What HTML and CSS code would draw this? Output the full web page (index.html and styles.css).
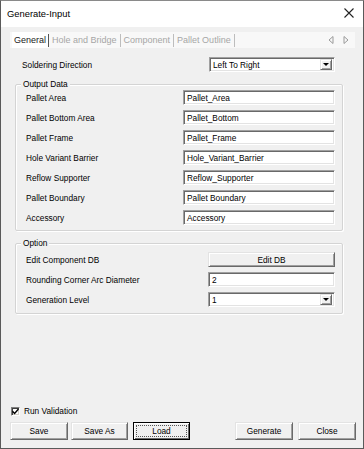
FILE: index.html
```html
<!DOCTYPE html>
<html lang="en">
<head>
  <meta charset="UTF-8" />
  <title>Generate-Input</title>
  <link rel="stylesheet" href="styles.css">
</head>
<body>
  <div class="window">
    <div class="titlebar">
      <span class="title">Generate-Input</span>
      <svg class="close-x" width="10" height="10" viewBox="0 0 10 10"><path d="M0.5 0.5 L9.5 9.5 M9.5 0.5 L0.5 9.5" stroke="#222" stroke-width="1.1" fill="none"/></svg>
    </div>

    <div class="client">
      <div class="tabs">
        <span class="tab active">General</span>
        <span class="sep dark"></span>
        <span class="tab">Hole and Bridge</span>
        <span class="sep"></span>
        <span class="tab">Component</span>
        <span class="sep"></span>
        <span class="tab">Pallet Outline</span>
        <span class="sep"></span>
        <span class="tab-arrows">
          <svg width="6" height="8" viewBox="0 0 6 8"><path d="M5 0.5 L1 4 L5 7.5 Z" fill="none" stroke="#9a9a9a"/></svg>
          <svg width="6" height="8" viewBox="0 0 6 8"><path d="M1 0.5 L5 4 L1 7.5 Z" fill="none" stroke="#9a9a9a"/></svg>
        </span>
      </div>

      <div class="page">
        <div class="row top-row">
          <span class="label">Soldering Direction</span>
          <div class="combo wide">
            <span class="value">Left To Right</span>
            <span class="drop"><span class="tri"></span></span>
          </div>
        </div>

        <div class="group output">
          <span class="legend">Output Data</span>
          <div class="row"><span class="label">Pallet Area</span><div class="field">Pallet_Area</div></div>
          <div class="row"><span class="label">Pallet Bottom Area</span><div class="field">Pallet_Bottom</div></div>
          <div class="row"><span class="label">Pallet Frame</span><div class="field">Pallet_Frame</div></div>
          <div class="row"><span class="label">Hole Variant Barrier</span><div class="field">Hole_Variant_Barrier</div></div>
          <div class="row"><span class="label">Reflow Supporter</span><div class="field">Reflow_Supporter</div></div>
          <div class="row"><span class="label">Pallet Boundary</span><div class="field">Pallet Boundary</div></div>
          <div class="row"><span class="label">Accessory</span><div class="field">Accessory</div></div>
        </div>

        <div class="group option">
          <span class="legend">Option</span>
          <div class="row"><span class="label">Edit Component DB</span><div class="btn narrow">Edit DB</div></div>
          <div class="row"><span class="label">Rounding Corner Arc Diameter</span><div class="field narrow">2</div></div>
          <div class="row">
            <span class="label">Generation Level</span>
            <div class="combo narrow">
              <span class="value">1</span>
              <span class="drop"><span class="tri"></span></span>
            </div>
          </div>
        </div>
      </div>

      <div class="footer">
        <div class="check-row">
          <span class="checkbox">
            <svg width="7" height="7" viewBox="0 0 7 7"><path d="M0.5 3.2 L2.6 5.4 L6.5 1" stroke="#000" stroke-width="1.4" fill="none"/></svg>
          </span>
          <span>Run Validation</span>
        </div>
        <div class="buttons">
          <div class="btn b-save">Save</div>
          <div class="btn b-saveas">Save As</div>
          <div class="btn b-load focused"><span class="focus-rect">Load</span></div>
          <div class="spacer"></div>
          <div class="btn b-gen">Generate</div>
          <div class="btn b-close">Close</div>
        </div>
      </div>
    </div>
  </div>
</body>
</html>
```

FILE: styles.css
```css
* {
  box-sizing: border-box;
}

body {
  margin: 0;
  background: #3a3a3a;
  font-family: "Liberation Sans", Arial, sans-serif;
  font-size: 8.3px;
  color: #000;
}

.window {
  width: 364px;
  height: 449px;
  border: 1px solid #5a5a5a;
  border-top-color: #8a8a8a;
  display: flex;
  flex-direction: column;
  background: #f0f0f0;
}

.titlebar {
  height: 26px;
  background: #fff;
  display: flex;
  align-items: center;
  padding: 0 8px 2px 6px;
}

.title {
  font-size: 9.4px;
  flex: 1;
}

.close-x {
  margin-right: 1px;
}

.client {
  flex: 1;
  display: flex;
  flex-direction: column;
  padding: 5px 7px 8px 9px;
}

/* tab strip */
.tabs {
  height: 16px;
  width: 345px;
  background: #f8f8f8;
  display: flex;
  align-items: stretch;
  padding-left: 2px;
  font-size: 9px;
}

.tab {
  display: flex;
  align-items: center;
  padding: 0 2px;
  color: #a6a6a6;
}

.tab.active {
  background: #fff;
  color: #1a1a1a;
}

.sep {
  width: 1px;
  margin: 2px 1px 1px;
  background: #bdbdbd;
}

.sep.dark {
  background: #555;
  margin-left: 0;
}

.tab-arrows {
  margin-left: auto;
  display: flex;
  align-items: center;
  gap: 9px;
  padding-right: 6px;
}

/* page */
.page {
  width: 334px;
  padding-left: 5px;
}

.row {
  height: 15px;
  display: flex;
  align-items: center;
}

.row .label {
  flex: 1;
}

.top-row {
  margin-top: 9px;
  padding-left: 7px;
  padding-right: 9px;
}

.group {
  position: relative;
  width: 328px;
  border: 1px solid #d4d4d4;
  border-radius: 2px;
  box-shadow: inset 1px 1px 0 #fff, 1px 1px 0 #fff;
  padding: 5px 7px 5px 10px;
  display: flex;
  flex-direction: column;
  gap: 5px;
}

.group .legend {
  position: absolute;
  top: -6px;
  left: 5px;
  padding: 0 2px;
  background: #f0f0f0;
  line-height: 10px;
}

.output {
  margin-top: 12px;
}

.option {
  margin-top: 12px;
  padding-top: 8px;
  padding-bottom: 6px;
}

.field,
.combo {
  height: 15px;
  width: 152px;
  background: #fff;
  border: 1px solid;
  border-color: #a0a0a0 #fff #fff #a0a0a0;
  box-shadow: inset 1px 1px 0 #696969, inset -1px -1px 0 #e3e3e3;
  padding: 0 3px;
  display: flex;
  align-items: center;
  white-space: nowrap;
}

.narrow {
  width: 127px;
}

.wide {
  width: 126px;
}

.combo {
  padding-right: 2px;
}

.combo .value {
  flex: 1;
}

.drop {
  width: 12px;
  height: 11px;
  background: #f0f0f0;
  border: 1px solid;
  border-color: #e3e3e3 #696969 #696969 #e3e3e3;
  box-shadow: inset 1px 1px 0 #fff, inset -1px -1px 0 #a0a0a0;
  display: flex;
  align-items: center;
  justify-content: center;
}

.tri {
  width: 0;
  height: 0;
  border-left: 3px solid transparent;
  border-right: 3px solid transparent;
  border-top: 3px solid #000;
}

.btn {
  height: 15px;
  background: #f0f0f0;
  border: 1px solid;
  border-color: #e3e3e3 #696969 #696969 #e3e3e3;
  box-shadow: inset 1px 1px 0 #fff, inset -1px -1px 0 #a0a0a0;
  display: flex;
  align-items: center;
  justify-content: center;
}

/* footer */
.footer {
  margin-top: auto;
}

.check-row {
  display: flex;
  align-items: center;
  gap: 4px;
  padding-left: 1px;
  height: 10px;
}

.checkbox {
  width: 9px;
  height: 9px;
  background: #fff;
  border: 1px solid;
  border-color: #808080 #fff #fff #808080;
  box-shadow: inset 1px 1px 0 #404040, inset -1px -1px 0 #d4d0c8;
  display: flex;
  align-items: center;
  justify-content: center;
}

.buttons {
  display: flex;
  margin-top: 6px;
  gap: 3px;
}

.buttons .btn {
  height: 18px;
  width: 58px;
}

.b-saveas {
  width: 57px !important;
}

.b-load {
  margin-left: 2px;
  width: 57px !important;
}

.spacer {
  flex: 1;
}

.b-close {
  margin-left: 2px;
}

.btn.focused {
  border-color: #000;
  box-shadow: inset 1px 1px 0 #fff, inset -1px -1px 0 #696969;
  padding: 2px;
}

.focus-rect {
  flex: 1;
  align-self: stretch;
  display: flex;
  align-items: center;
  justify-content: center;
  border: 1px dotted #555;
}
```
